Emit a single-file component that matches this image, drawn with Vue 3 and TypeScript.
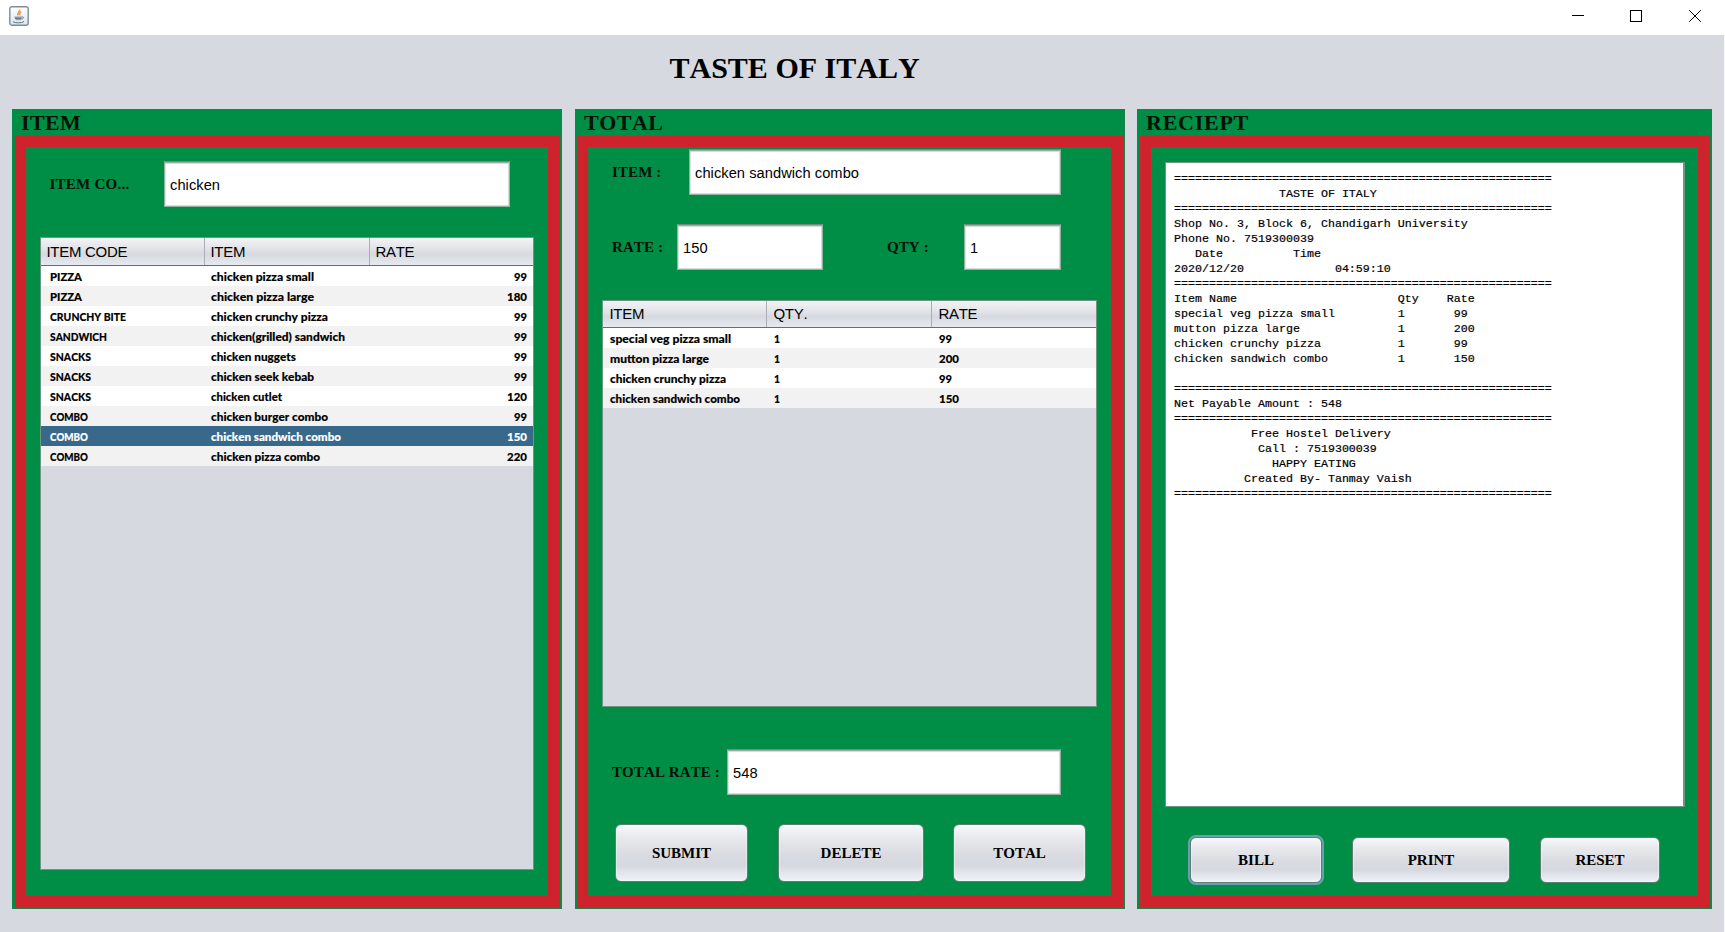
<script setup lang="ts">
interface Cell { text: string; width: number }
interface MenuRow { code: Cell; item: Cell; rate: Cell; selected?: boolean }
interface OrderRow { item: Cell; qty: Cell; rate: Cell }

const c = (text: string, width: number): Cell => ({ text, width })

const menu: MenuRow[] = [
  { code: c('PIZZA', 32), item: c('chicken pizza small', 103), rate: c('99', 13) },
  { code: c('PIZZA', 32), item: c('chicken pizza large', 103), rate: c('180', 20) },
  { code: c('CRUNCHY BITE', 76), item: c('chicken crunchy pizza', 117), rate: c('99', 13) },
  { code: c('SANDWICH', 57), item: c('chicken(grilled) sandwich', 134), rate: c('99', 13) },
  { code: c('SNACKS', 41), item: c('chicken nuggets', 85), rate: c('99', 13) },
  { code: c('SNACKS', 41), item: c('chicken seek kebab', 103), rate: c('99', 13) },
  { code: c('SNACKS', 41), item: c('chicken cutlet', 71), rate: c('120', 20) },
  { code: c('COMBO', 38), item: c('chicken burger combo', 117), rate: c('99', 13) },
  { code: c('COMBO', 38), item: c('chicken sandwich combo', 130), rate: c('150', 20), selected: true },
  { code: c('COMBO', 38), item: c('chicken pizza combo', 109), rate: c('220', 20) },
]

const order: OrderRow[] = [
  { item: c('special veg pizza small', 121), qty: c('1', 6), rate: c('99', 13) },
  { item: c('mutton pizza large', 99), qty: c('1', 6), rate: c('200', 20) },
  { item: c('chicken crunchy pizza', 116), qty: c('1', 6), rate: c('99', 13) },
  { item: c('chicken sandwich combo', 130), qty: c('1', 6), rate: c('150', 20) },
]

const rule = '='.repeat(54)
const at = (...parts: [number, string][]): string =>
  parts.reduce((line, [col, text]) => line.padEnd(col) + text, '')

const receipt: string = [
  rule,
  at([15, 'TASTE OF ITALY']),
  rule,
  'Shop No. 3, Block 6, Chandigarh University',
  'Phone No. 7519300039',
  at([3, 'Date'], [17, 'Time']),
  at([0, '2020/12/20'], [23, '04:59:10']),
  rule,
  at([0, 'Item Name'], [32, 'Qty'], [39, 'Rate']),
  at([0, 'special veg pizza small'], [32, '1'], [40, '99']),
  at([0, 'mutton pizza large'], [32, '1'], [40, '200']),
  at([0, 'chicken crunchy pizza'], [32, '1'], [40, '99']),
  at([0, 'chicken sandwich combo'], [32, '1'], [40, '150']),
  '',
  rule,
  'Net Payable Amount : 548',
  rule,
  at([11, 'Free Hostel Delivery']),
  at([12, 'Call : 7519300039']),
  at([14, 'HAPPY EATING']),
  at([10, 'Created By- Tanmay Vaish']),
  rule,
].join('\n')
</script>

<template>
  <div class="window">
    <header class="titlebar">
      <svg class="java" width="20" height="20" viewBox="0 0 20 20">
        <defs>
          <linearGradient id="tile" x1="0" y1="0" x2="0" y2="1">
            <stop offset="0" stop-color="#ffffff" />
            <stop offset="1" stop-color="#dfe5ea" />
          </linearGradient>
        </defs>
        <rect x=".8" y=".8" width="18.4" height="18.4" rx="2" fill="url(#tile)" stroke="#7c8d9b" stroke-width="1.4" />
        <path d="M10.6 3.6c1 1.7-3.2 3-1.300 5.900M12.300 5.700c-2.600 1-1.400 2.100-1.600 3.700" fill="none" stroke="#e89a5a" stroke-width="1.500" />
        <path d="M5.400 10.600h7.600c0 1.600-.5 3-1.500 3.600H7.200c-1-.7-1.600-2-1.800-3.600z" fill="#8fa3b3" />
        <path d="M13 10.900c2.200-.5 2.200 1.900-.6 2.200" fill="none" stroke="#6f8799" stroke-width="1" />
        <path d="M6 12.300h6M4 15.800c2.600 1.400 8.400 1.400 11-.2" fill="none" stroke="#587389" stroke-width="1" />
      </svg>
      <svg class="controls" width="130" height="14" viewBox="0 0 130 14" fill="none" stroke="#000">
        <path d="M1 6.500h12" />
        <rect x="59.500" y="1.500" width="11" height="11" />
        <path d="M118.200 1.200l11.600 11.600M129.800 1.200l-11.600 11.600" />
      </svg>
    </header>

    <h1>TASTE OF ITALY</h1>

    <main>
      <section class="panel">
        <h2>ITEM</h2>
        <div class="frame items">
          <div class="row">
            <label>ITEM CO...</label>
            <div class="field f-code">chicken</div>
          </div>
          <div class="table menu">
            <div class="thead"><span>ITEM CODE</span><span>ITEM</span><span>RATE</span></div>
            <div v-for="(r, i) in menu" :key="i" class="tr" :class="{ selected: r.selected }">
              <svg class="code"><text y="15.400" :textLength="r.code.width" lengthAdjust="spacingAndGlyphs">{{ r.code.text }}</text></svg>
              <svg><text y="15.400" :textLength="r.item.width" lengthAdjust="spacingAndGlyphs">{{ r.item.text }}</text></svg>
              <svg class="num" :width="r.rate.width"><text y="15.400" :textLength="r.rate.width" lengthAdjust="spacingAndGlyphs">{{ r.rate.text }}</text></svg>
            </div>
          </div>
        </div>
      </section>

      <section class="panel middle">
        <h2>TOTAL</h2>
        <div class="frame totals">
          <div class="row">
            <label>ITEM :</label>
            <div class="field f-item">chicken sandwich combo</div>
          </div>
          <div class="row r-rate">
            <label>RATE :</label>
            <div class="field f-rate">150</div>
            <label class="l-qty">QTY :</label>
            <div class="field f-qty">1</div>
          </div>
          <div class="table order">
            <div class="thead"><span>ITEM</span><span>QTY.</span><span>RATE</span></div>
            <div v-for="(r, i) in order" :key="i" class="tr">
              <svg><text y="15.400" :textLength="r.item.width" lengthAdjust="spacingAndGlyphs">{{ r.item.text }}</text></svg>
              <svg><text y="15.400" :textLength="r.qty.width" lengthAdjust="spacingAndGlyphs">{{ r.qty.text }}</text></svg>
              <svg><text y="15.400" :textLength="r.rate.width" lengthAdjust="spacingAndGlyphs">{{ r.rate.text }}</text></svg>
            </div>
          </div>
          <div class="row r-total">
            <label>TOTAL RATE :</label>
            <div class="field f-total">548</div>
          </div>
          <div class="buttons">
            <button class="b-submit">SUBMIT</button>
            <button class="b-delete">DELETE</button>
            <button class="b-total">TOTAL</button>
          </div>
        </div>
      </section>

      <section class="panel wide">
        <h2>RECIEPT</h2>
        <div class="frame bill">
          <pre>{{ receipt }}</pre>
          <div class="buttons">
            <button class="b-bill">BILL</button>
            <button class="b-print">PRINT</button>
            <button class="b-reset">RESET</button>
          </div>
        </div>
      </section>
    </main>
  </div>
</template>

<style>
body { margin: 0; background: #d6d9e0; overflow: hidden; }
</style>

<style scoped>
* { box-sizing: border-box; }
.window {
  width: 1725px; height: 932px; background: #d6d9e0; border-right: 1px solid #f6f7f9;
  display: flex; flex-direction: column; color: #000;
  font-family: "Liberation Sans", Arial, sans-serif; font-kerning: none;
}
.titlebar {
  height: 35px; flex: none; background: #fff; display: flex; justify-content: space-between;
  padding: 6px 24px 0 9px; margin-right: -1px;
}
.controls { margin-top: 3px; }
h1 {
  margin: 0; height: 74px; flex: none; padding: 16px 0 0 669.500px;
  font: bold 30px/34px "Liberation Serif", "Times New Roman", serif; font-kerning: none;
  white-space: nowrap;
}
main { display: flex; height: 800px; padding-left: 12px; }
.panel {
  width: 550px; height: 800px; margin-right: 13px; background: #008d45;
  display: flex; flex-direction: column; padding: 0 2px 2px 3px;
  box-shadow: inset -1px -1px #257b49;
}
.panel.middle { padding-left: 2px; }
.panel.wide { width: 575px; margin-right: 0; margin-left: -1px; }
h2 {
  margin: 0; height: 27px; padding-left: 6px; color: #001206;
  font: bold 22px/27px "Liberation Serif", "Times New Roman", serif; font-kerning: none;
  letter-spacing: .4px;
}
.middle h2 { padding-left: 7px; letter-spacing: .5px; }
.wide h2 { letter-spacing: .75px; }
.frame {
  flex: 1; border: 11px solid #ce222c; border-right-width: 12px;
  box-shadow: 0 0 0 1px #43703f66, inset 0 0 0 1px #43703f88;
}
.row { display: flex; align-items: center; height: 46px; }
label {
  font: bold 15px/18px "Liberation Serif", "Times New Roman", serif; color: #001206;
  font-kerning: none; letter-spacing: .1px; white-space: nowrap;
}
.field {
  height: 46px; background: #fff; border: 1px solid #8fb3a0; border-top-color: #6c8f7c;
  box-shadow: inset 0 1px 0 #a3a8a6, inset 0 2px 1px #d5d8d7, inset 1px 0 1px #dfe3e1, inset -1px -1px 1px #d3dcd7;
  padding-left: 5px; font-size: 14.67px; line-height: 46px; letter-spacing: .05px; white-space: nowrap;
}
.items { padding: 14px 13px 0 14px; }
.items label { width: 124px; padding-left: 9.500px; letter-spacing: .25px; }
.f-code { width: 346px; }
.items .table { margin-top: 30px; height: 633px; }
.totals { padding: 2px 14px 0 13px; }
.totals label { padding-left: 11px; }
.totals label:first-child { width: 76px; }
.totals .row:first-child label { width: 88px; }
.f-item { width: 372px; }
.r-rate { margin-top: 29px; }
.f-rate { width: 146px; }
.totals .l-qty { width: 141px; padding-left: 64px; }
.f-qty { width: 97px; }
.totals .table { margin: 30px 0 0 1px; height: 407px; width: 495px; }
.r-total { margin-top: 42px; }
.totals .r-total label:first-child { width: 126px; }
.f-total { width: 334px; }

.table { background: #d6d9e0; border: 1px solid #6f9583; width: 494px; }
.thead {
  height: 28px; display: grid; grid-template-columns: 164px 165px 1fr;
  background: linear-gradient(#f3f4f6, #dfe1e6 45%, #d6d9df 60%, #e6e9ef);
  border-bottom: 1px solid #686b74; font-size: 15px; line-height: 27px;
}
.thead span { padding-left: 5.500px; border-right: 1px solid #a9adb6; letter-spacing: -.3px; }
.thead span:last-child { border-right: 0; padding-left: 5.500px; }
.order .thead { height: 27px; line-height: 26px; }
.order .thead span { padding-left: 6.500px; }
.tr { height: 20px; display: grid; grid-template-columns: 164px 165px 1fr; background: #fff; }
.tr:nth-child(odd) { background: #f2f2f2; }
.tr.selected { background: #39698a; }
.tr svg { height: 20px; width: 158px; margin-left: 7px; overflow: visible; }
.menu .tr svg { margin-left: 6px; }
.menu .tr svg.code { margin-left: 9px; width: 150px; }
.menu .tr svg.num { justify-self: end; margin: 0 6px 0 0; width: auto; }
.tr text {
  font-family: Lato, "Open Sans", sans-serif; font-weight: 900; font-size: 12px;
  fill: #000; stroke: #000; stroke-width: .15px;
}
.tr.selected text { fill: #fff; stroke: #fff; }

.buttons { display: flex; }
button {
  border: 1px solid #5d7f72; border-radius: 6px; padding: 0; color: #000;
  font: bold 15px/18px "Liberation Serif", "Times New Roman", serif; font-kerning: none;
  background: linear-gradient(#f7f8fa, #e6e8eb 25%, #d9dbe1 55%, #d5d8df 72%, #e2e5ec 85%, #f0f2f7);
  box-shadow: inset 0 0 0 1px #ffffff55;
}
.totals .buttons { margin: 29px 0 0 14px; gap: 30px; }
.totals button { height: 58px; width: 133px; }
.totals .b-delete { width: 146px; }
.totals .b-total { margin-left: -1px; }
.bill { padding: 15px 12px 0 14px; }
.bill .buttons { margin: 30px 0 0 25px; gap: 30px; }
.bill button { height: 46px; }
.b-bill { width: 132px; outline: 2px solid #6b9db5; outline-offset: 0; }
.b-print { width: 158px; }
.b-reset { width: 120px; }
pre {
  margin: 0; width: 520px; height: 645px; background: #fff; border: 1px solid #6f9583;
  border-right-width: 2px;
  padding: 9px 0 0 8px; font: 11.667px/15px "Liberation Mono", "Courier New", monospace;
  -webkit-text-stroke: .2px #000;
}
</style>
